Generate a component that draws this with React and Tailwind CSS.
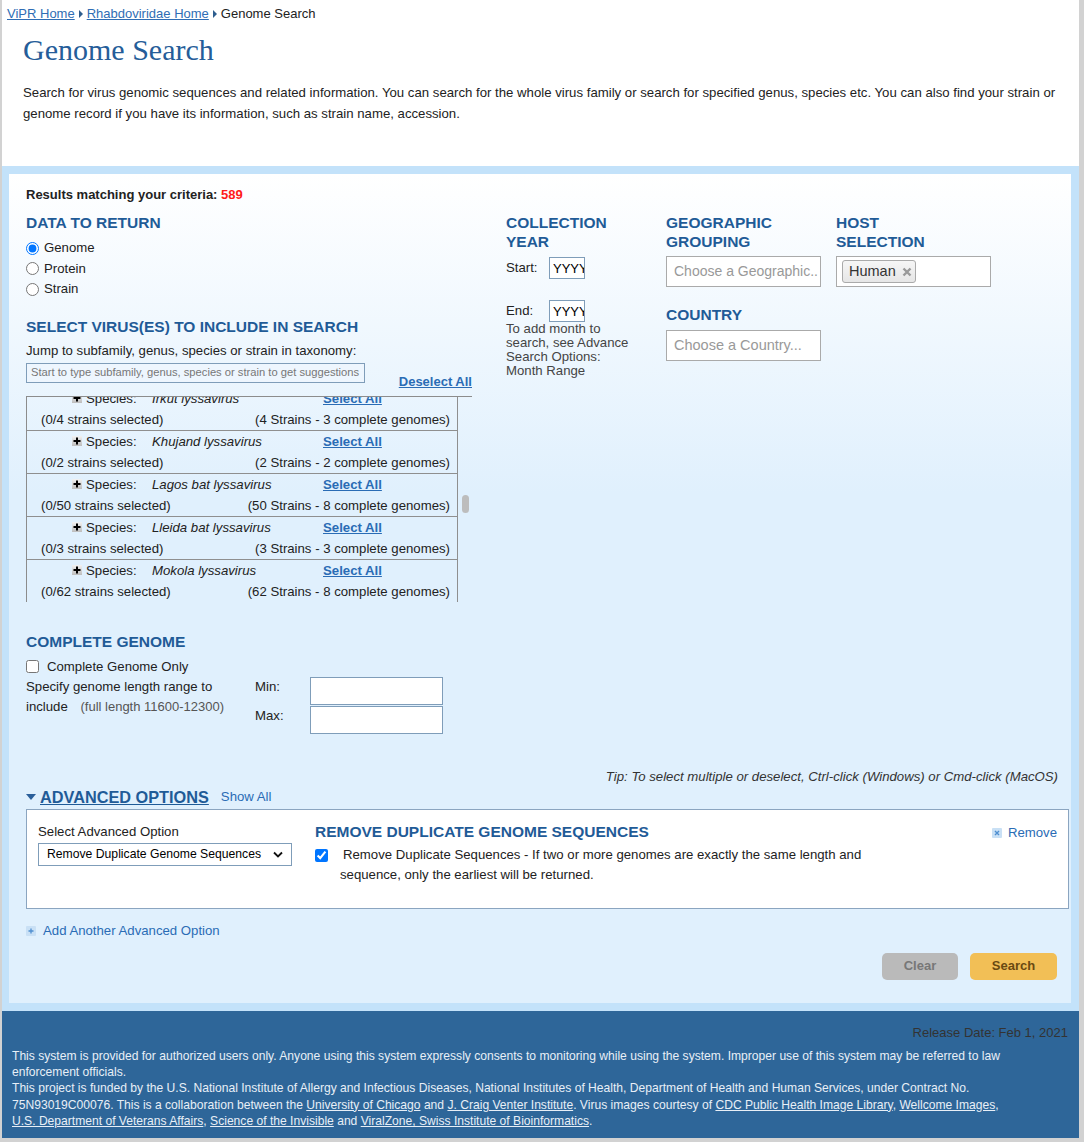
import React from 'react'

// Species shown in the taxonomy list (scrolled a little past the first one)
const species = [
  { name: 'Irkut lyssavirus', sel: '(0/4 strains selected)', info: '(4 Strains - 3 complete genomes)' },
  { name: 'Khujand lyssavirus', sel: '(0/2 strains selected)', info: '(2 Strains - 2 complete genomes)' },
  { name: 'Lagos bat lyssavirus', sel: '(0/50 strains selected)', info: '(50 Strains - 8 complete genomes)' },
  { name: 'Lleida bat lyssavirus', sel: '(0/3 strains selected)', info: '(3 Strains - 3 complete genomes)' },
  { name: 'Mokola lyssavirus', sel: '(0/62 strains selected)', info: '(62 Strains - 8 complete genomes)' }
]

function Crumb() {
  return (
    <svg width="4" height="8" viewBox="0 0 4 8" className="mx-[4px] inline-block">
      <path d="M0 0 L4 4 L0 8 Z" fill="#2d5d8e" />
    </svg>
  )
}

function Heading({ children, className = '' }) {
  return (
    <h3 className={`text-[15.5px] font-bold leading-[19px] text-[#1f5b97] ${className}`}>
      {children}
    </h3>
  )
}

function PlusBox() {
  return (
    <svg width="10" height="10" viewBox="0 0 10 10">
      <defs>
        <linearGradient id="pg" x1="0" y1="0" x2="0" y2="1">
          <stop offset="0" stopColor="#f2f2f2" />
          <stop offset="1" stopColor="#bdbdbd" />
        </linearGradient>
      </defs>
      <rect x="0" y="0" width="10" height="10" fill="url(#pg)" />
      <path d="M5 1.5 V8.5 M1.5 5 H8.5" stroke="#000" strokeWidth="2" />
    </svg>
  )
}

function SpeciesRow({ item }) {
  return (
    <div className="border-b border-[#8f8f8f] text-[13.2px] leading-[21px] text-[#222]">
      <div className="flex items-center pl-[45px]">
        <PlusBox />
        <span className="ml-[4px] w-[66px]">Species:</span>
        <span className="w-[171px] italic">{item.name}</span>
        <a href="#" className="font-bold text-[#2a6cb5] underline">Select All</a>
      </div>
      <div className="flex justify-between pl-[14px] pr-[7px]">
        <span>{item.sel}</span>
        <span>{item.info}</span>
      </div>
    </div>
  )
}

export default function App() {
  return (
    <div className="min-h-[1142px] bg-[#d2d2d2] font-['Liberation_Sans',Arial,sans-serif] text-[#222]">
      <div className="ml-[2px] w-[1077px] bg-white">
        {/* Header */}
        <div className="pt-[6px] pb-[42px]">
          <div className="flex items-center pl-[5px] text-[13px] leading-[16px]">
            <a href="#" className="text-[#2f6db4] underline">ViPR Home</a>
            <Crumb />
            <a href="#" className="text-[#2f6db4] underline">Rhabdoviridae Home</a>
            <Crumb />
            <span>Genome Search</span>
          </div>
          <h1 className="mt-[10px] pl-[21px] font-['Liberation_Serif',Georgia,serif] text-[30px] leading-[36px] text-[#255d99]">
            Genome Search
          </h1>
          <p className="mt-[14px] pl-[21px] pr-[19px] text-[13.2px] leading-[21px]">
            Search for virus genomic sequences and related information. You can search for the whole virus family or search for specified genus, species etc. You can also find your strain or genome record if you have its information, such as strain name, accession.
          </p>
        </div>

        {/* Search panel */}
        <div className="bg-[#c3e2fa] pl-[7px] pr-[8px] pt-[8px] pb-[8px]">
          <div className="bg-[linear-gradient(to_bottom,#ffffff_0px,#e0f0fd_320px)] pt-[14px] pb-[23px]">
            <div className="pl-[17px] text-[13px] font-bold leading-[14px]">
              Results matching your criteria: <span className="text-[#ff1a1a]">589</span>
            </div>

            <div className="flex pl-[17px]">
              {/* Left column */}
              <div className="w-[446px]">
                <Heading className="mt-[11px]">DATA TO RETURN</Heading>
                <div className="mt-[6px] text-[13.2px] leading-[20.5px]">
                  {['Genome', 'Protein', 'Strain'].map((label, i) => (
                    <label key={label} className="flex items-center">
                      <input type="radio" name="ret" defaultChecked={i === 0} className="h-[13px] w-[13px]" />
                      <span className="ml-[5px]">{label}</span>
                    </label>
                  ))}
                </div>

                <Heading className="mt-[17px]">SELECT VIRUS(ES) TO INCLUDE IN SEARCH</Heading>
                <div className="mt-[8px] text-[13.2px] leading-[14px]">
                  Jump to subfamily, genus, species or strain in taxonomy:
                </div>
                <div className="mt-[5px] flex">
                  <div className="flex h-[20px] w-[339px] items-center border border-[#7f9db9] bg-[#eef6fe] pl-[4px] text-[11.2px] text-[#777]">
                    Start to type subfamily, genus, species or strain to get suggestions
                  </div>
                  <a href="#" className="ml-auto mt-[11px] text-[13px] font-bold leading-[15px] text-[#2a6cb5] underline">
                    Deselect All
                  </a>
                </div>

                <div className="mt-[7px] flex h-[206px] border-l border-t border-[#8c8c8c]">
                  <div className="w-[431px] overflow-hidden border-r border-[#8f8f8f]">
                    <div className="-mt-[9px]">
                      {species.map((s) => (
                        <SpeciesRow key={s.name} item={s} />
                      ))}
                    </div>
                  </div>
                  <div className="w-[14px] pt-[98px]">
                    <div className="mx-auto h-[18px] w-[7px] rounded-full bg-[#bdbdbd]" />
                  </div>
                </div>

                <Heading className="mt-[30px] leading-[18px]">COMPLETE GENOME</Heading>
                <label className="mt-[7px] flex items-center text-[13.2px] leading-[18px]">
                  <input type="checkbox" className="h-[13px] w-[13px]" />
                  <span className="ml-[8px]">Complete Genome Only</span>
                </label>
                <div className="mt-[1px] flex text-[13.2px] leading-[20px]">
                  <div className="w-[229px]">
                    Specify genome length range to
                    <br />
                    include <span className="ml-[9px] text-[13px] text-[#555]">(full length 11600-12300)</span>
                  </div>
                  <div className="w-[55px]">
                    <div className="h-[29px]">Min:</div>
                    <div className="h-[28px]">Max:</div>
                  </div>
                  <div className="flex flex-col gap-[1px]">
                    <input readOnly className="h-[28px] w-[133px] border border-[#7f9db9] bg-white" />
                    <input readOnly className="h-[28px] w-[133px] border border-[#7f9db9] bg-white" />
                  </div>
                </div>
              </div>

              {/* Collection year */}
              <div className="ml-[34px] w-[160px]">
                <Heading className="mt-[11px]">COLLECTION<br />YEAR</Heading>
                <div className="mt-[6px] flex items-center text-[13.2px]">
                  <span className="w-[43px]">Start:</span>
                  <input readOnly defaultValue="YYYY" className="h-[22px] w-[36px] border border-[#7f9db9] bg-white pl-[3px] text-[13px] text-black" />
                </div>
                <div className="mt-[21px] flex items-center text-[13.2px]">
                  <span className="w-[43px]">End:</span>
                  <input readOnly defaultValue="YYYY" className="h-[22px] w-[36px] border border-[#7f9db9] bg-white pl-[3px] text-[13px] text-black" />
                </div>
                <p className="w-[132px] text-[13.2px] leading-[14px] text-[#444]">
                  To add month to search, see Advance Search Options: Month Range
                </p>
              </div>

              {/* Geographic grouping + country */}
              <div className="w-[170px]">
                <Heading className="mt-[11px]">GEOGRAPHIC<br />GROUPING</Heading>
                <div className="mt-[5px] flex h-[31px] w-[155px] items-center overflow-hidden whitespace-nowrap border border-[#aaa] bg-white pl-[7px] text-[14px] text-[#999]">
                  Choose a Geographic..
                </div>
                <Heading className="mt-[18px]">COUNTRY</Heading>
                <div className="mt-[6px] flex h-[31px] w-[155px] items-center overflow-hidden whitespace-nowrap border border-[#aaa] bg-white pl-[7px] text-[14.5px] text-[#999]">
                  Choose a Country...
                </div>
              </div>

              {/* Host selection */}
              <div className="w-[170px]">
                <Heading className="mt-[11px]">HOST<br />SELECTION</Heading>
                <div className="mt-[5px] h-[31px] w-[155px] border border-[#aaa] bg-white pl-[5px] pt-[3px]">
                  <div className="flex h-[23px] w-[74px] items-center rounded-[3px] border border-[#aaa] bg-[linear-gradient(to_bottom,#f6f6f6,#e6e6e6)] pl-[6px] text-[14.5px] text-[#333]">
                    Human
                    <svg width="10" height="10" viewBox="0 0 10 10" className="ml-[6px]">
                      <path d="M1.5 1.5 L8.5 8.5 M8.5 1.5 L1.5 8.5" stroke="#999" strokeWidth="2.4" />
                    </svg>
                  </div>
                </div>
              </div>
            </div>

            {/* Advanced options */}
            <div className="mt-[35px] pr-[13px] text-right text-[13.2px] italic leading-[15px] text-[#333]">
              Tip: To select multiple or deselect, Ctrl-click (Windows) or Cmd-click (MacOS)
            </div>
            <div className="mt-[3px] flex items-center pl-[17px] leading-[20px]">
              <svg width="10" height="6" viewBox="0 0 10 6" className="mr-[4px]">
                <path d="M0 0 H10 L5 6 Z" fill="#2a5f9a" />
              </svg>
              <a href="#" className="text-[16.3px] font-bold text-[#1f5b97] underline">ADVANCED OPTIONS</a>
              <a href="#" className="ml-[12px] text-[13.2px] text-[#2a6cb5]">Show All</a>
            </div>
            <div className="ml-[17px] mr-[2px] mt-[2px] flex h-[100px] border border-[#8ba5c0] bg-white">
              <div className="w-[288px] shrink-0 pl-[11px] pt-[14px]">
                <div className="text-[13.2px] leading-[16px]">Select Advanced Option</div>
                <div className="mt-[3px] flex h-[23px] w-[254px] items-center justify-between border border-[#7f9db9] bg-white pl-[8px] pr-[8px] text-[12.2px] text-black">
                  Remove Duplicate Genome Sequences
                  <svg width="10" height="7" viewBox="0 0 10 7">
                    <path d="M1 1.5 L5 5.5 L9 1.5" stroke="#111" strokeWidth="1.8" fill="none" />
                  </svg>
                </div>
              </div>
              <div className="flex-1 pt-[12px]">
                <Heading className="leading-[18px]">REMOVE DUPLICATE GENOME SEQUENCES</Heading>
                <div className="mt-[4px] flex text-[13.2px] leading-[20px]">
                  <input type="checkbox" defaultChecked className="mt-[4px] h-[13px] w-[13px]" />
                  <p className="ml-[12px] w-[530px] indent-[3px]">
                    Remove Duplicate Sequences - If two or more genomes are exactly the same length and sequence, only the earliest will be returned.
                  </p>
                </div>
              </div>
              <div className="flex h-fit items-center pr-[11px] pt-[15px] text-[13.2px] leading-[16px] text-[#2a6cb5]">
                <svg width="10" height="10" viewBox="0 0 10 10" className="mr-[6px]">
                  <rect width="10" height="10" rx="1" fill="#c9e0f5" />
                  <path d="M3 3 L7 7 M7 3 L3 7" stroke="#4f8fd0" strokeWidth="1.4" />
                </svg>
                Remove
              </div>
            </div>
            <div className="mt-[14px] flex items-center pl-[17px] text-[13.2px] leading-[16px] text-[#2a6cb5]">
              <svg width="10" height="10" viewBox="0 0 10 10" className="mr-[7px]">
                <rect width="10" height="10" rx="1" fill="#c9e0f5" />
                <path d="M5 2.5 V7.5 M2.5 5 H7.5" stroke="#4f8fd0" strokeWidth="1.3" />
              </svg>
              Add Another Advanced Option
            </div>
            <div className="mt-[14px] flex justify-end gap-[12px] pr-[14px]">
              <button className="h-[27px] w-[76px] rounded-[5px] bg-[#bababa] text-[13px] font-bold text-[#777]">Clear</button>
              <button className="h-[27px] w-[87px] rounded-[5px] bg-[#f2bf56] text-[13px] font-bold text-[#6a4a12]">Search</button>
            </div>
          </div>
        </div>

        {/* Footer */}
        <div className="h-[127px] bg-[#2e6699] pl-[10px] pt-[14px] text-[12.1px] text-[#e8eff7]">
          <div className="pr-[11px] text-right text-[13px] leading-[16px] text-[#333]">Release Date: Feb 1, 2021</div>
          <div className="mt-[7px] w-[1000px] leading-[16.4px]">
            <div>
              This system is provided for authorized users only. Anyone using this system expressly consents to monitoring while using the system. Improper use of this system may be referred to law enforcement officials.
            </div>
            <div>
              This project is funded by the U.S. National Institute of Allergy and Infectious Diseases, National Institutes of Health, Department of Health and Human Services, under Contract No. 75N93019C00076. This is a collaboration between the <a href="#" className="underline">University of Chicago</a> and <a href="#" className="underline">J. Craig Venter Institute</a>. Virus images courtesy of <a href="#" className="underline">CDC Public Health Image Library</a>, <a href="#" className="underline">Wellcome Images</a>, <a href="#" className="underline">U.S. Department of Veterans Affairs</a>, <a href="#" className="underline">Science of the Invisible</a> and <a href="#" className="underline">ViralZone, Swiss Institute of Bioinformatics</a>.
            </div>
          </div>
        </div>
      </div>
    </div>
  )
}
